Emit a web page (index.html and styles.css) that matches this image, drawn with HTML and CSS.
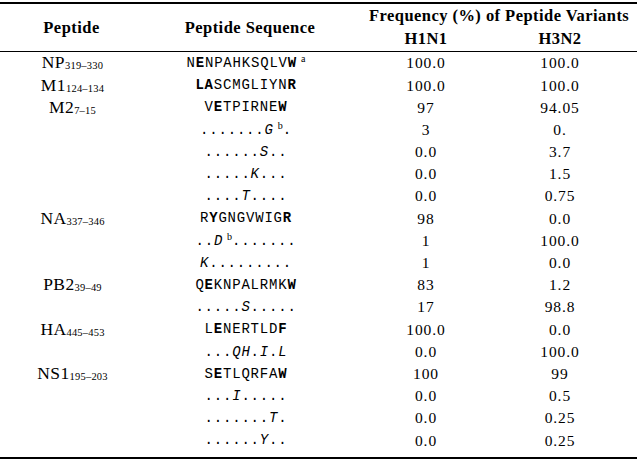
FILE: index.html
```html
<!DOCTYPE html>
<html lang="en">
<head>
<meta charset="utf-8">
<title>Peptide variants</title>
<link rel="stylesheet" href="styles.css">
</head>
<body>
<table class="peptides">
  <colgroup>
    <col class="col-name">
    <col class="col-seq">
    <col class="col-h1">
    <col class="col-h3">
  </colgroup>
  <thead>
    <tr class="head-top">
      <th rowspan="2" class="th-name">Peptide</th>
      <th rowspan="2" class="th-seq">Peptide Sequence</th>
      <th colspan="2" class="th-freq">Frequency (%) of Peptide Variants</th>
    </tr>
    <tr class="head-bottom">
      <th>H1N1</th>
      <th>H3N2</th>
    </tr>
  </thead>
  <tbody>
    <tr class="row-first"><td class="name">NP<sub>319–330</sub></td><td class="seq">N<b>E</b>NPAHKSQLV<b>W</b><sup class="note">a</sup></td><td>100.0</td><td>100.0</td></tr>
    <tr><td class="name">M1<sub>124–134</sub></td><td class="seq"><b>LA</b>SCMGLIYN<b>R</b></td><td>100.0</td><td>100.0</td></tr>
    <tr><td class="name">M2<sub>7–15</sub></td><td class="seq">V<b>E</b>TPIRNE<b>W</b></td><td>97</td><td>94.05</td></tr>
    <tr><td class="name"></td><td class="seq">.......<i>G</i><sup class="note">b</sup>.</td><td>3</td><td>0.</td></tr>
    <tr><td class="name"></td><td class="seq">......<i>S</i>..</td><td>0.0</td><td>3.7</td></tr>
    <tr><td class="name"></td><td class="seq">.....<i>K</i>...</td><td>0.0</td><td>1.5</td></tr>
    <tr><td class="name"></td><td class="seq">....<i>T</i>....</td><td>0.0</td><td>0.75</td></tr>
    <tr><td class="name">NA<sub>337–346</sub></td><td class="seq">R<b>Y</b>GNGVWIG<b>R</b></td><td>98</td><td>0.0</td></tr>
    <tr><td class="name"></td><td class="seq">..<i>D</i><sup class="note">b</sup>.......</td><td>1</td><td>100.0</td></tr>
    <tr><td class="name"></td><td class="seq"><i>K</i>.........</td><td>1</td><td>0.0</td></tr>
    <tr><td class="name">PB2<sub>39–49</sub></td><td class="seq">Q<b>E</b>KNPALRMK<b>W</b></td><td>83</td><td>1.2</td></tr>
    <tr><td class="name"></td><td class="seq">.....<i>S</i>.....</td><td>17</td><td>98.8</td></tr>
    <tr><td class="name">HA<sub>445–453</sub></td><td class="seq">L<b>E</b>NERTLD<b>F</b></td><td>100.0</td><td>0.0</td></tr>
    <tr><td class="name"></td><td class="seq">...<i>QH</i>.<i>I</i>.<i>L</i></td><td>0.0</td><td>100.0</td></tr>
    <tr><td class="name">NS1<sub>195–203</sub></td><td class="seq">S<b>E</b>TLQRFA<b>W</b></td><td>100</td><td>99</td></tr>
    <tr><td class="name"></td><td class="seq">...<i>I</i>.....</td><td>0.0</td><td>0.5</td></tr>
    <tr><td class="name"></td><td class="seq">.......<i>T</i>.</td><td>0.0</td><td>0.25</td></tr>
    <tr class="row-last"><td class="name"></td><td class="seq">......<i>Y</i>..</td><td>0.0</td><td>0.25</td></tr>
  </tbody>
</table>
</body>
</html>
```
FILE: styles.css
```css
html, body {
  margin: 0;
  padding: 0;
  background: #fff;
}

body {
  width: 637px;
  height: 460px;
  overflow: hidden;
  color: #000;
  font-family: "Liberation Serif", "Times New Roman", serif;
  font-size: 15.5px;
  letter-spacing: 0.9px;
}

.peptides {
  width: 637px;
  margin-top: 2px;
  border-collapse: collapse;
  table-layout: fixed;
  border-top: 2px solid #000;
  border-bottom: 2px solid #000;
}

.col-name { width: 131px; }
.col-seq { width: 238px; }
.col-h1 { width: 114px; }
.col-h3 { width: 154px; }

.peptides th,
.peptides td {
  padding: 0;
  text-align: center;
  vertical-align: middle;
  white-space: nowrap;
  line-height: 1;
}

.peptides th {
  font-weight: bold;
  font-size: 16.5px;
  letter-spacing: 0.45px;
}

.head-top th { height: 23px; padding-top: 1px; }
.head-bottom th { height: 22px; border-bottom: 1px solid #000; padding-bottom: 1px; }

.th-name { padding-left: 12px !important; }
.th-freq { padding-right: 14px !important; }
.th-name, .th-seq { border-bottom: 1px solid #000; }

.peptides tbody td { height: 22.2px; }
.peptides tbody .row-first td { padding-top: 0; }
.peptides tbody .row-last td { padding-bottom: 6px; }

.name {
  padding-left: 14px !important;
  text-align: center;
  font-size: 17.5px;
  letter-spacing: 0.4px;
}

.name sub {
  font-size: 10.5px;
  letter-spacing: 0.2px;
  vertical-align: -1px;
  line-height: 0;
}

.seq {
  font-family: "Liberation Mono", "Courier New", monospace;
  font-size: 14px;
  letter-spacing: 0.8px;
  padding-right: 8px !important;
}

.seq b { font-weight: bold; }
.seq i { font-style: italic; }

.note {
  font-family: "Liberation Serif", serif;
  font-size: 10px;
  letter-spacing: 0;
  vertical-align: 5px;
  line-height: 0;
  margin-left: 4px;
}
```
